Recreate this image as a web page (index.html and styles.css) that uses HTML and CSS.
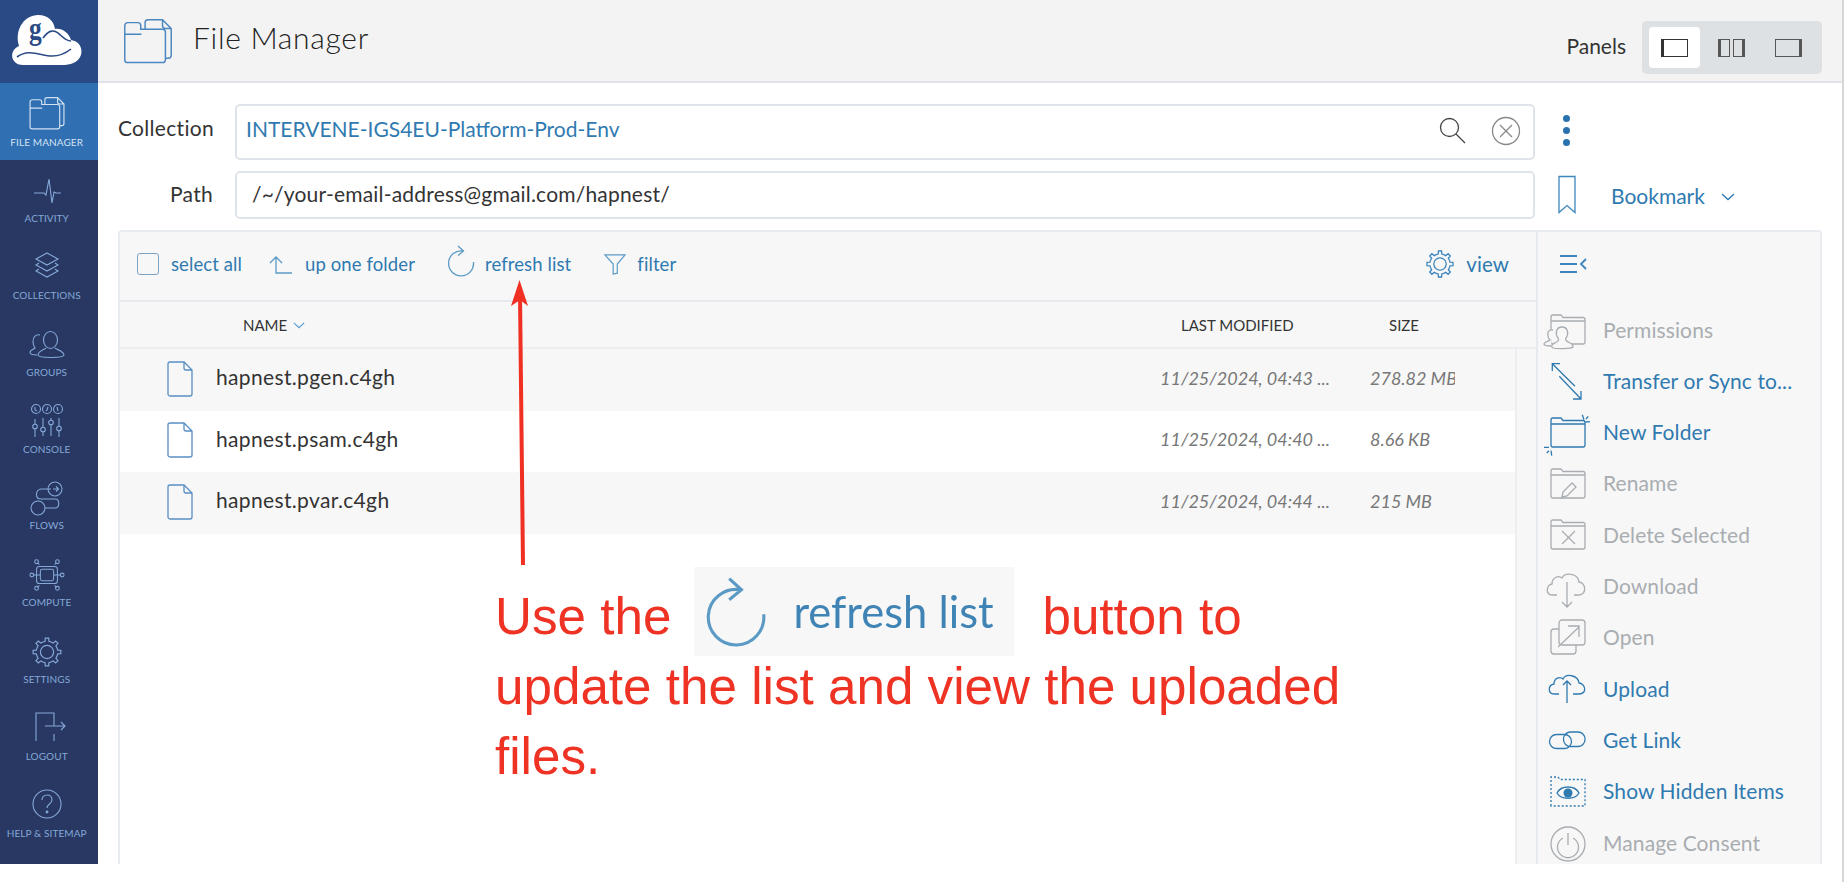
FILE: index.html
```html
<!DOCTYPE html>
<html lang="en">
<head>
<meta charset="utf-8">
<title>File Manager</title>
<link rel="stylesheet" href="styles.css">
</head>
<body>
<svg class="defs" aria-hidden="true">
  <symbol id="gear" viewBox="-15 -15 30 30">
    <g id="tooth"><path d="M-3.9-9.4L-1.8-10L-1.6-13H1.6L1.8-10L3.9-9.4"/></g>
    <use href="#tooth" transform="rotate(45)"/><use href="#tooth" transform="rotate(90)"/><use href="#tooth" transform="rotate(135)"/><use href="#tooth" transform="rotate(180)"/><use href="#tooth" transform="rotate(225)"/><use href="#tooth" transform="rotate(270)"/><use href="#tooth" transform="rotate(315)"/>
    <circle r="6.2"/>
  </symbol>
  <symbol id="files" viewBox="0 0 34 31">
    <path d="M1 4.5a2 2 0 0 1 2-2h7a2 2 0 0 1 2 2V7h15a2 2 0 0 1 2 2v19a2 2 0 0 1-2 2H3a2 2 0 0 1-2-2zM1 10.500h11.500"/>
    <path d="M15 7V2.500a2 2 0 0 1 2-2h10l6 6V25a2 2 0 0 1-2 2h-2M27 .5v4a2 2 0 0 0 2 2h4"/>
  </symbol>
  <symbol id="file" viewBox="0 0 26 36">
    <path d="M3 1h14l8 8v24a2 2 0 0 1-2 2H3a2 2 0 0 1-2-2V3a2 2 0 0 1 2-2zM17 1v6a2 2 0 0 0 2 2h6"/>
  </symbol>
  <symbol id="folder" viewBox="0 0 44 36" overflow="visible">
    <path d="M8 30V6a2 2 0 0 1 2-2h8l2 2.500h20a2 2 0 0 1 2 2V31a2 2 0 0 1-2 2H10a2 2 0 0 1-2-2zM8 10h34"/>
  </symbol>
  <symbol id="refresh" viewBox="0 0 27 32">
    <path d="M15 6A12.500 12.500 0 1 0 25.500 17M10 1l5.500 5L10 10.500"/>
  </symbol>
  <symbol id="chev" viewBox="0 0 14 8"><path d="M1 1l6 5.500L13 1"/></symbol>
</svg>

<div class="app">
  <nav class="side">
    <div class="logo">
      <svg viewBox="0 0 98 83" class="logo-svg">
        <path class="logo-cloud" d="M23 65C11 65 8 51 19 46C14 29 25 15 38 15C49 15 54 22 55 29C62 28 69 33 71 40C79 41 83 48 81 55C78 63 70 65 62 65Z"/>
        <path class="logo-line" d="M43 38C48 31 53 29 58 33C62 36 65 41 71 41M17 57C29 48 41 56 52 56C60 56 66 53 71 49"/>
        <text transform="translate(29 39) scale(.82 1)" class="logo-g">g</text>
      </svg>
    </div>
    <a class="nav active"><svg class="nav-ico"><use href="#files" width="36" height="33"/></svg><span>File Manager</span></a>
    <a class="nav"><svg class="nav-ico" viewBox="0 0 36 34"><path d="M5 19h10l2 2 3-16 3 24 2-11 2 1h5"/></svg><span>Activity</span></a>
    <a class="nav"><svg class="nav-ico" viewBox="0 0 36 34"><path d="M18 2l11 6-11 6-11-6zM10 12l-3 2 11 6 11-6-3-2M10 18l-3 2 11 6 11-6-3-2"/></svg><span>Collections</span></a>
    <a class="nav"><svg class="nav-ico" viewBox="0 0 36 34"><ellipse cx="21.500" cy="13" rx="7" ry="8.500"/><path d="M17 21c-1 1.500-8 3-8 7 0 2 6 2.500 13 2.500s13-.5 13-2.500c0-4-8-5.500-9-7M11 8c-4-1-7 2-7 6.500 0 3 1 5 2 6.500-1 1-5 2-5 4.500 0 2 3 2.500 7 2.500"/></svg><span>Groups</span></a>
    <a class="nav"><svg class="nav-ico" viewBox="0 0 36 34"><circle cx="7" cy="5" r="4.500"/><circle cx="18" cy="5" r="4.500"/><circle cx="29" cy="5" r="4.500"/><path d="M6 3v3l2 1M19 3l-1 3-1 1M28 3l1 4M6 15v5m0 5v8M14 14v9m0 5v4M22 14v2m0 5v11M30 14v8m0 5v6"/><circle cx="6" cy="22.500" r="2.300"/><circle cx="14" cy="25.500" r="2.300"/><circle cx="22" cy="18.500" r="2.300"/><circle cx="30" cy="24.500" r="2.300"/></svg><span>Console</span></a>
    <a class="nav"><svg class="nav-ico" viewBox="0 0 36 34"><circle cx="26" cy="8" r="7"/><circle cx="9" cy="27" r="7"/><path d="M16 27h10c5 0 5-9 0-9H12c-6 0-6-9 0-10h10M24 8h5m-2-2.500L29.500 8 27 10.500"/></svg><span>Flows</span></a>
    <a class="nav"><svg class="nav-ico" viewBox="0 0 38 34"><rect x="12" y="11" width="14" height="12" rx="2"/><rect x="8" y="8" width="22" height="18" rx="3"/><path d="M4 17H12M26 17H34M11 6l-2-2M27 6l2-2M11 28l-2 2M27 28l2 2"/><circle cx="3" cy="17" r="2"/><circle cx="35" cy="17" r="2"/><circle cx="8" cy="3" r="2"/><circle cx="30" cy="3" r="2"/><circle cx="8" cy="31" r="2"/><circle cx="30" cy="31" r="2"/></svg><span>Compute</span></a>
    <a class="nav"><svg class="nav-ico"><use href="#gear" width="32" height="32" x="2" y="1"/></svg><span>Settings</span></a>
    <a class="nav"><svg class="nav-ico" viewBox="0 0 36 34"><path d="M8 30V2h18v13m0 8v7M17 15h20m-4-4l4 4-4 4" transform="translate(-1 0)"/></svg><span>Logout</span></a>
    <a class="nav"><svg class="nav-ico" viewBox="0 0 36 34"><circle cx="18" cy="16" r="14"/><path d="M13 12c0-3 2-5 5-5s5 2 5 5c0 4-5 4-5 8"/><circle class="dot" cx="18" cy="24" r=".9"/></svg><span>Help &amp; Sitemap</span></a>
  </nav>

  <main class="main">
    <header class="top">
      <svg class="top-ico"><use href="#files" width="50" height="45"/></svg>
      <h1 class="title">File Manager</h1>
      <div class="panels">
        <span class="panels-label">Panels</span>
        <div class="panels-box">
          <button class="pbtn on"><i class="pane pane-l"></i></button>
          <button class="pbtn"><i class="pane-m"><b class="pm-l"></b><b class="pm-r"></b></i></button>
          <button class="pbtn"><i class="pane pane-r"></i></button>
        </div>
      </div>
    </header>

    <section class="form">
      <div class="frow frow-c">
        <label class="flabel label-c">Collection</label>
        <div class="input input-c">
          <span class="coll">INTERVENE-IGS4EU-Platform-Prod-Env</span>
          <svg class="i-search" viewBox="0 0 27 27"><circle cx="10.500" cy="10.500" r="9"/><path d="M17 17l9 9"/></svg>
          <svg class="i-clear" viewBox="0 0 30 30"><circle cx="15" cy="15" r="13.500"/><path d="M9 9l12 12M21 9L9 21"/></svg>
        </div>
        <div class="more"><i></i><i></i><i></i></div>
      </div>
      <div class="frow frow-p">
        <label class="flabel">Path</label>
        <div class="input input-p"><span class="ptext">/~/your-email-address@gmail.com/hapnest/</span></div>
        <svg class="i-book" viewBox="0 0 20 40"><path d="M2 1.500h16v36l-8-7-8 7z"/></svg>
        <span class="bookmark">Bookmark</span>
        <svg class="i-chev chev-b"><use href="#chev" width="14" height="8"/></svg>
      </div>
    </section>

    <section class="browser">
      <div class="pane-main">
        <div class="toolbar">
          <span class="tool t-sel"><i class="check"></i>select all</span>
          <span class="tool t-up"><svg class="i-t i-up" viewBox="0 0 24 19"><path d="M7 2v16h16M1 8l6-6 6 6"/></svg>up one folder</span>
          <span class="tool t-ref"><svg class="i-t i-ref"><use href="#refresh" width="27" height="32"/></svg>refresh list</span>
          <span class="tool t-fil"><svg class="i-t i-fil" viewBox="0 0 24 23"><path d="M1 1h22l-8.500 10v10l-4.500 1V11z"/></svg>filter</span>
          <span class="tool t-view"><svg class="i-t i-gear"><use href="#gear" width="30" height="30"/></svg>view</span>
        </div>
        <div class="thead">
          <span class="th th-n">NAME<svg class="i-chev chev-n"><use href="#chev" width="12" height="7"/></svg></span>
          <span class="th th-d">LAST MODIFIED</span>
          <span class="th th-s">SIZE</span>
        </div>
        <div class="listwrap">
          <div class="list">
            <div class="row"><span class="name"><svg class="i-file"><use href="#file" width="26" height="36"/></svg><span class="fname">hapnest.pgen.c4gh</span></span><span class="date">11/25/2024, 04:43 ...</span><span class="size">278.82 MB</span></div>
            <div class="row"><span class="name"><svg class="i-file"><use href="#file" width="26" height="36"/></svg><span class="fname">hapnest.psam.c4gh</span></span><span class="date">11/25/2024, 04:40 ...</span><span class="size">8.66 KB</span></div>
            <div class="row"><span class="name"><svg class="i-file"><use href="#file" width="26" height="36"/></svg><span class="fname">hapnest.pvar.c4gh</span></span><span class="date">11/25/2024, 04:44 ...</span><span class="size">215 MB</span></div>
          </div>
          <div class="strip"></div>
        </div>
      </div>
      <aside class="actions">
        <div class="act-top"><svg class="i-menu" viewBox="0 0 28 20"><path d="M1 2h17M1 10h17M1 18h17M27 5l-5 5 5 5"/></svg></div>
        <ul class="act-list">
          <li class="act off"><svg class="i-a"><use href="#folder" width="44" height="36"/><path d="M12 32c4-2 4-3 3-5-3-4-2-11 4-11s7 7 4 11c-1 2 0 3 4 5 3 1 3 3 3 4-2 2-17 2-20 1-2-1-2-4 2-5zM10 19c-4-1-6 2-5 6 0 2 1 3 2 4-1 1-6 2-6 4 0 2 4 2 7 2" class="fillbg"/></svg>Permissions</li>
          <li class="act"><svg class="i-a" viewBox="0 0 44 36"><path d="M9.300 1.700L32 24.300M16.300 14.300L38 37M9.300 9V1.700H17M38 29V37H30"/></svg>Transfer or Sync to...</li>
          <li class="act"><svg class="i-a"><use href="#folder" width="44" height="36"/><path d="M39.300.7L41 5.700M47 7.700L42.300 8M45.300 2.300L43 5M1 33.300H6M3.700 39L6 36.700M8.700 41.700L8 36.700"/></svg>New Folder</li>
          <li class="act off"><svg class="i-a"><use href="#folder" width="44" height="36"/><path d="M20 27l9-9 4 4-9 9-5 1zM18 33h2"/></svg>Rename</li>
          <li class="act off"><svg class="i-a"><use href="#folder" width="44" height="36"/><path d="M19 15l13 13M32 15L19 28"/></svg>Delete Selected</li>
          <li class="act off"><svg class="i-a" viewBox="0 0 44 36"><path d="M14 27H10c-8 0-7-10-1-11 0-7 7-9 10-6 3-6 16-5 17 4 6 0 9 12 0 13h-5M24 14v25m-5-5l5 5 5-5"/></svg>Download</li>
          <li class="act off"><svg class="i-a" viewBox="0 0 44 36"><rect x="16" y="1" width="26" height="25" rx="3"/><path d="M16 10h-5a3 3 0 0 0-3 3v19a3 3 0 0 0 3 3h19a3 3 0 0 0 3-3v-6M15 28l21-20M25 7h11v11"/></svg>Open</li>
          <li class="act"><svg class="i-a" viewBox="0 0 44 36"><path d="M16 24H12c-8 0-7-9-1-10 0-6 6-8 9-5 3-6 15-4 16 4 6 0 9 11 0 11h-6M24 33V11m-4 4l4-4 4 4"/></svg>Upload</li>
          <li class="act"><svg class="i-a" viewBox="0 0 44 36"><rect x="6.500" y="13.500" width="22" height="14" rx="7"/><rect x="20.500" y="11" width="21.500" height="14.500" rx="7"/></svg>Get Link</li>
          <li class="act"><svg class="i-a" viewBox="0 0 44 36"><path class="dash" d="M8 33V4h7l2 2.500h25V33z"/><path d="M14 20c4-8 18-8 22 0-4 7-18 7-22 0z"/><circle class="solid" cx="25" cy="20" r="4.500"/></svg>Show Hidden Items</li>
          <li class="act off"><svg class="i-a" viewBox="0 0 44 36"><circle cx="25" cy="20" r="17"/><path d="M20 14a10.500 10.500 0 1 0 10 0M25 9v12"/></svg>Manage Consent</li>
        </ul>
      </aside>
    </section>
  </main>
</div>

<div class="note">
  <svg class="note-arrow" viewBox="0 0 30 290"><path class="arrow-line" d="M14 15L17 285"/><path class="arrow-head" d="M13.500 0L22 26L14 20L5 26Z"/></svg>
  <div class="note-text">
    <div class="note-line"><span class="w1">Use the</span>
      <span class="shot"><svg class="shot-ico"><use href="#refresh" width="60" height="72"/></svg><span class="shot-text">refresh list</span></span>
      <span>button to</span></div>
    <div class="note-line">update the list and view the uploaded</div>
    <div class="note-line">files.</div>
  </div>
</div>
</body>
</html>
```
FILE: styles.css
```css
* { box-sizing: border-box; }
html, body { margin: 0; padding: 0; background: #fff; }
body { width: 1848px; height: 882px; overflow: hidden; position: relative; font-family: Lato, "Open Sans", sans-serif; color: #333; }
.defs { position: absolute; width: 0; height: 0; }
svg { fill: none; stroke: currentColor; stroke-width: 1.3; overflow: visible; display: block; flex: none; }
symbol { overflow: visible; }

.app { display: flex; width: 1844px; height: 882px; border-right: 2px solid #d6d6d6; align-items: flex-start; }

/* sidebar */
.side { width: 98px; height: 864px; background: #283862; flex: none; display: flex; flex-direction: column; }
.logo { height: 83px; background: #2a4a85; }
.logo-svg { width: 98px; height: 83px; stroke: none; }
.logo-cloud { fill: #fff; }
.logo-line { stroke: #2a4a85; stroke-width: 1.6; }
.logo-g { font-family: "Liberation Serif", serif; font-weight: 700; font-size: 31px; fill: #2a4a85; stroke: none; }
.nav { height: 76.800px; display: flex; flex-direction: column; align-items: center; color: #85a8d8; padding: 14px 4.600px 0 0; }
.nav span { font-size: 10px; line-height: 13px; text-transform: uppercase; letter-spacing: .1px; margin-top: 4.500px; white-space: nowrap; }
.nav-ico { width: 36px; height: 34px; stroke-width: 1.1; }
.nav.active { background: #2f6fb2; color: #d3e2f3; }
.dot { fill: currentColor; }

/* main */
.main { width: 1744px; height: 864px; display: flex; flex-direction: column; flex: none; }
.top { height: 83px; flex: none; background: #f3f3f3; border-bottom: 2px solid #e0e3e7; display: flex; align-items: flex-start; padding-left: 25px; }
.top-ico { width: 50px; height: 45px; margin-top: 19px; color: #4a86c0; stroke-width: 1; }
.title { margin: 16px 0 0 20px; font-weight: 300; font-size: 30px; line-height: 42px; color: #222; letter-spacing: .7px; }
.panels { margin-left: auto; margin-right: 20px; margin-top: 21px; display: flex; align-items: center; }
.panels-label { font-size: 21px; margin-right: 16px; color: #333; position: relative; top: -2px; }
.panels-box { width: 180px; height: 53px; background: #dee1e4; border-radius: 5px; display: flex; padding: 6px 7px; }
.pbtn { width: 51px; height: 41px; flex: none; border: 0; background: none; padding: 0; margin-right: 6px; border-radius: 4px; display: flex; align-items: center; justify-content: center; }
.pbtn.on { background: #fff; }
.pane { display: flex; width: 27px; height: 18px; border: 1px solid #555; }
.pane-l { border-left: 3px solid #333; border-color: #333; }
.pane-m { display: flex; width: 27px; height: 18px; justify-content: space-between; }
.pane-m b { display: block; width: 12px; height: 100%; border: 1px solid #555; }
.pm-l { border-left-width: 3px !important; }
.pm-r { border-right-width: 3px !important; }
.pane-r { border-right-width: 3px; }

/* form */
.form { padding: 21px 0 0 20px; flex: none; }
.frow { display: flex; align-items: center; }
.frow-c { height: 56px; margin-bottom: 11px; }
.frow-p { height: 48px; margin-bottom: 11px; }
.flabel { width: 95px; margin-right: 22px; text-align: right; font-size: 21px; letter-spacing: .3px; color: #333; padding-bottom: 4px; white-space: nowrap; }
.label-c { padding-bottom: 10px; }
.input { width: 1300px; height: 100%; border: 2px solid #dfe3ea; border-radius: 5px; display: flex; align-items: center; font-size: 21px; background: #fff; }
.input-c { padding-left: 9px; }
.input-p { padding-left: 15px; }
.coll { color: #2f7ab0; flex: 1; padding-bottom: 7px; }
.ptext { letter-spacing: .2px; padding-bottom: 4px; }
.i-search { width: 27px; height: 27px; color: #444; margin: -4px 25px 0 0; }
.i-clear { width: 30px; height: 30px; color: #888; margin: -2px 12px 0 0; }
.more { margin: -4px 0 0 28px; display: flex; flex-direction: column; gap: 5px; }
.more i { width: 7px; height: 7px; background: #2a72ad; border-radius: 50%; display: block; }
.i-book { width: 20px; height: 40px; color: #3c86bd; margin-left: 22px; }
.bookmark { color: #2f7ab0; font-size: 21px; margin-left: 34px; }
.i-chev { width: 14px; height: 8px; color: #2f7ab0; }
.chev-b { margin-left: 16px; margin-top: 3px; }

/* browser */
.browser { margin-left: 20px; width: 1704px; flex: 1; min-height: 0; display: flex; border: 2px solid #e8ebef; border-bottom: 0; border-radius: 4px 4px 0 0; }
.pane-main { width: 1416px; flex: none; display: flex; flex-direction: column; }
.toolbar { height: 70px; background: #f7f7f7; border-bottom: 2px solid #e6e9ee; display: flex; align-items: center; font-size: 18.500px; letter-spacing: .1px; color: #2f7ab0; flex: none; padding-bottom: 4px; }
.tool { display: flex; align-items: center; white-space: nowrap; }
.check { width: 22px; height: 22px; border: 1.500px solid #7ba4c6; border-radius: 3px; margin-right: 12px; display: block; }
.t-sel { margin-left: 17px; }
.t-up { margin-left: 27px; }
.t-ref { margin-left: 33px; }
.t-fil { margin-left: 33px; }
.t-view { margin-left: auto; margin-right: 27px; font-size: 20.500px; }
.i-t { color: #5c9ac6; }
.i-up { width: 24px; height: 19px; margin-right: 12px; }
.i-ref { width: 27px; height: 32px; margin-right: 10px; margin-top: -6px; }
.i-fil { width: 22px; height: 21px; margin-right: 11px; }
.i-gear { width: 30px; height: 30px; margin-right: 11px; margin-left: -6px; color: #3c86bd; }
.thead { height: 47px; background: #f7f7f7; border-bottom: 2px solid #ebedf0; display: grid; grid-template-columns: 1040px 210px 85px; align-items: center; font-size: 15px; color: #333; flex: none; }
.th { white-space: nowrap; }
.th-n { padding-left: 123px; display: flex; align-items: center; }
.th-d { padding-left: 21px; }
.th-s { padding-left: 19px; }
.chev-n { width: 12px; height: 7px; margin-left: 6px; color: #4f9bd0; margin-top: 2px; }
.listwrap { flex: 1; display: flex; min-height: 0; }
.list { width: 1395px; flex: none; }
.strip { flex: 1; background: #f7f7f7; border-left: 2px solid #eceef1; }
.row { height: 61.500px; display: grid; grid-template-columns: 1040px 210px 85px; align-items: center; }
.row:nth-child(odd) { background: #f7f7f7; }
.name { display: flex; align-items: center; font-size: 21px; color: #333; padding-left: 47px; letter-spacing: .35px; }
.fname { margin-bottom: 6px; }
.i-file { width: 26px; height: 36px; margin-right: 23px; margin-top: -2px; color: #5a8fc4; }
.date, .size { font-style: italic; font-size: 18px; color: #777; white-space: nowrap; overflow: hidden; padding-bottom: 4px; }

/* right actions */
.actions { flex: 1; background: #f7f7f7; border-left: 2px solid #e6e9ee; display: flex; flex-direction: column; }
.act-top { height: 71.400px; flex: none; padding: 22px 0 0 21px; }
.i-menu { width: 28px; height: 20px; color: #3c86bd; stroke-width: 1.800; }
.act-list { list-style: none; margin: 0; padding: 0; }
.act { height: 51.300px; display: flex; align-items: center; font-size: 21px; color: #2f7ab0; padding-left: 5px; white-space: nowrap; letter-spacing: .1px; }
.act.off { color: #a9adb1; }
.i-a { width: 44px; height: 36px; margin-right: 16px; }
.fillbg { fill: #f7f7f7; }
.dash { stroke-dasharray: 2 2; }
.solid { fill: currentColor; stroke: none; }

/* annotation, drawn over the screenshot */
.note { position: absolute; left: 0; top: 0; width: 1848px; height: 882px; pointer-events: none; }
.note-arrow { position: absolute; left: 506px; top: 280px; width: 30px; height: 290px; stroke: none; }
.arrow-line { stroke: #f03023; stroke-width: 4; }
.arrow-head { fill: #f03023; }
.note-text { position: absolute; left: 495px; top: 582px; font-family: "Liberation Sans", Arial, sans-serif; font-size: 51.200px; color: #ee3224; white-space: nowrap; }
.note-line { height: 70px; line-height: 70px; display: flex; align-items: flex-start; }
.shot { width: 320px; height: 89px; margin: -15px 28px 0 23px; background: #f7f7f7; display: flex; align-items: center; padding-left: 13px; flex: none; }
.shot-ico { width: 60px; height: 72px; color: #5c9ac6; stroke-width: 1.400; }
.shot-text { font-family: Lato, sans-serif; font-size: 43.500px; color: #3f84b4; margin-left: 26px; line-height: 1; filter: blur(.5px); }
```
